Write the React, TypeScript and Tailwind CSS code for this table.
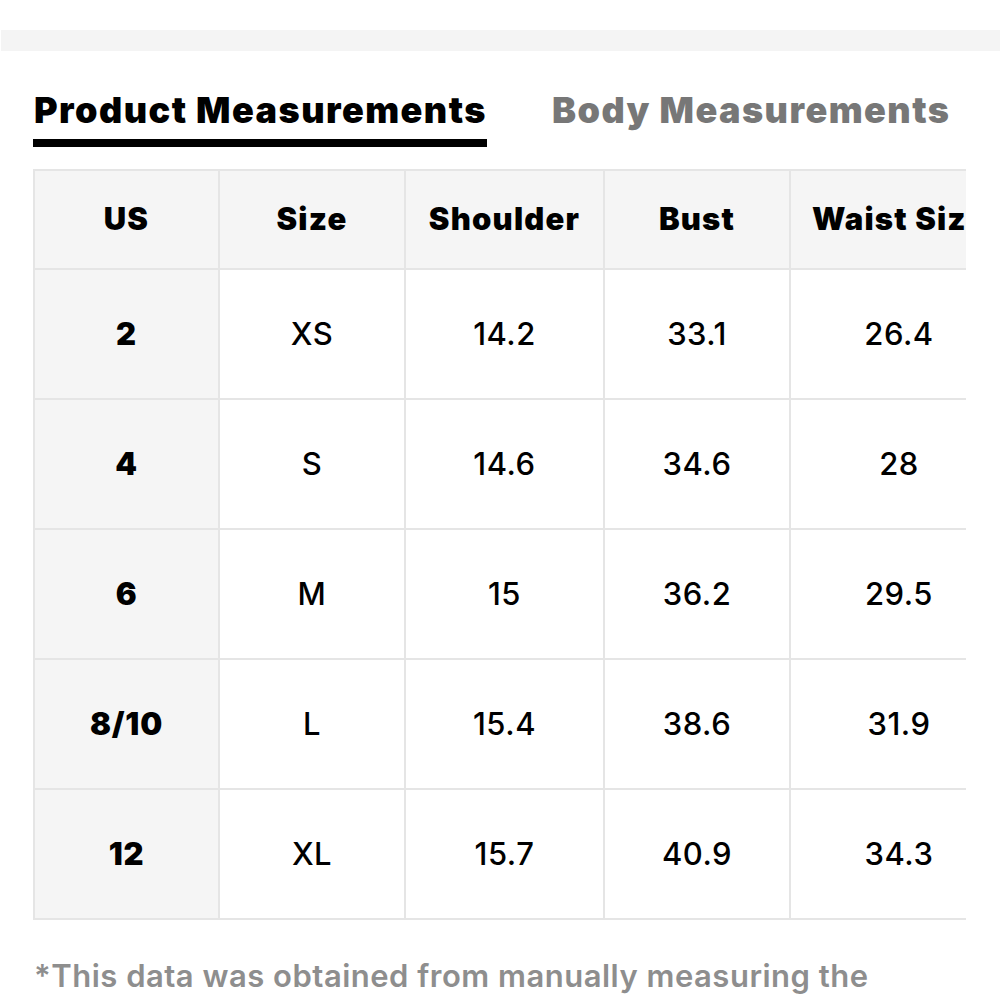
const headers = ["US", "Size", "Shoulder", "Bust", "Waist Size"];
const widths = ["w-[185px]", "w-[186px]", "w-[199px]", "w-[186px]", "w-[218px]"];

const rows = [
  ["2", "XS", "14.2", "33.1", "26.4"],
  ["4", "S", "14.6", "34.6", "28"],
  ["6", "M", "15", "36.2", "29.5"],
  ["8/10", "L", "15.4", "38.6", "31.9"],
  ["12", "XL", "15.7", "40.9", "34.3"],
];

export default function App() {
  return (
    <div className="min-h-[1000px] overflow-hidden bg-white pt-[30px] font-['Inter','Liberation_Sans',sans-serif] text-black">
      <div className="ml-px h-[21px] bg-[#f4f4f4]" />

      <div className="px-[33px]">
        <div className="mt-[41px] flex items-start gap-[65px]">
          <div className="border-b-[8px] border-black pb-[11px] pl-px text-[36px] font-black leading-[36px] tracking-[1.45px]">
            Product Measurements
          </div>
          <div className="text-[36px] font-black leading-[36px] tracking-[1.45px] text-[#777777]">
            Body Measurements
          </div>
        </div>

        <div className="mt-[22px] w-[933px] overflow-hidden">
          <table className="w-[974px] table-fixed border-collapse">
            <thead>
              <tr className="h-[99px] bg-[#f5f5f5]">
                {headers.map((h, i) => (
                  <th
                    key={h}
                    className={`${widths[i]} whitespace-nowrap border-2 border-[#e5e5e5] text-[31px] font-black tracking-[1.2px]`}
                  >
                    {h}
                  </th>
                ))}
              </tr>
            </thead>
            <tbody>
              {rows.map((row) => (
                <tr key={row[0]} className="h-[130px]">
                  {row.map((cell, i) => (
                    <td
                      key={i}
                      className={
                        i === 0
                          ? "border-2 border-[#e5e5e5] bg-[#f5f5f5] text-center text-[31px] font-black tracking-[0.8px]"
                          : "border-2 border-[#e5e5e5] text-center text-[31px] font-medium tracking-[0.5px]"
                      }
                    >
                      {cell}
                    </td>
                  ))}
                </tr>
              ))}
            </tbody>
          </table>
        </div>

        <p className="mt-[36px] w-[880px] pl-px text-[31px] font-semibold leading-[40px] tracking-[0.5px] text-[#8e8e8e]">
          *This data was obtained from manually measuring the product, it may be off by 1-2 CM.
        </p>
      </div>
    </div>
  );
}
